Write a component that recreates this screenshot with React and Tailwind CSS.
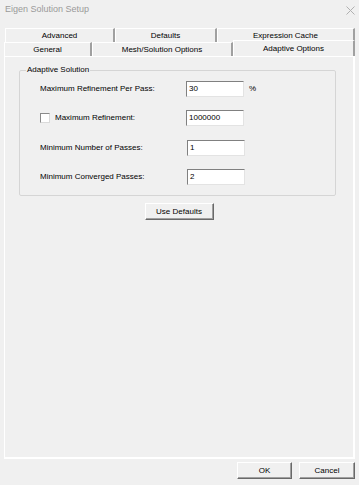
import React from "react";

const font = { fontFamily: '"Liberation Sans", Arial, sans-serif' };

function Tab({ w, children }) {
  return (
    <div
      className={`h-full flex items-center justify-center border-t border-l border-white border-r-2 border-r-[#a0a0a0] text-[8px] text-black ${w}`}
    >
      {children}
    </div>
  );
}

function Field({ value }) {
  return (
    <div className="w-[58px] h-[16px] bg-white border-t border-l border-[#808080] border-r border-b border-r-[#e3e3e3] border-b-[#e3e3e3] flex items-center pl-[2px] text-[8px] text-black">
      {value}
    </div>
  );
}

function Btn({ w, children }) {
  return (
    <div
      className={`h-[17px] ${w} bg-[#f0f0f0] border-t border-l border-white border-r border-b border-r-[#696969] border-b-[#696969] shadow-[inset_-1px_-1px_0_#a0a0a0] flex items-center justify-center text-[8px] text-black`}
    >
      {children}
    </div>
  );
}

export default function App() {
  return (
    <div
      className="w-[359px] h-[485px] bg-[#f0f0f0] flex flex-col overflow-hidden"
      style={font}
    >
      <div className="h-[20px] flex items-center justify-between pl-[5px] pr-[4px]">
        <span className="text-[9px] text-[#9a9a9a]">Eigen Solution Setup</span>
        <svg width="9" height="9" viewBox="0 0 9 9" className="mt-[1px]">
          <path d="M0.5 0.5 L8.5 8.5 M8.5 0.5 L0.5 8.5" stroke="#b0b0b0" strokeWidth="1" />
        </svg>
      </div>

      <div className="mt-[8px] ml-[5px] w-[350px] h-[14px] flex">
        <Tab w="w-[110px]">Advanced</Tab>
        <Tab w="w-[102px]">Defaults</Tab>
        <Tab w="w-[138px]">Expression Cache</Tab>
      </div>
      <div className="ml-[4px] w-[351px] h-[14px] flex">
        <Tab w="w-[88px]">General</Tab>
        <Tab w="w-[141px]">Mesh/Solution Options</Tab>
        <div className="w-[122px] h-[16px] -mt-[2px] bg-[#f0f0f0] border-t border-l border-white border-r-2 border-r-[#a0a0a0] flex items-start justify-center pt-[2px] text-[8px] text-black relative z-10">
          Adaptive Options
        </div>
      </div>

      <div className="ml-[4px] w-[351px] h-[403px] border-t border-l border-white border-r-2 border-b-2 border-[#a0a0a0] border-t-white border-l-white flex flex-col">
        <fieldset className="ml-[14px] mt-[8px] w-[317px] h-[131px] border border-[#d5d5d5] rounded-[2px]">
          <legend className="ml-[6px] px-[1px] text-[8px] text-black leading-[10px]">
            Adaptive Solution
          </legend>
          <div className="flex flex-col gap-[13px] mt-[6px] pl-[20px]">
            <div className="flex items-center h-[16px]">
              <span className="w-[146px] text-[8px] text-black">Maximum Refinement Per Pass:</span>
              <Field value="30" />
              <span className="ml-[5px] text-[8px] text-black">%</span>
            </div>
            <div className="flex items-center h-[16px]">
              <div className="w-[146px] flex items-center">
                <div className="w-[10px] h-[10px] bg-white border border-[#8a8a8a] border-r-[#dadada] border-b-[#dadada]" />
                <span className="ml-[5px] text-[8px] text-black">Maximum Refinement:</span>
              </div>
              <Field value="1000000" />
            </div>
            <div className="flex items-center h-[16px] mt-[1px]">
              <span className="w-[147px] text-[8px] text-black">Minimum Number of Passes:</span>
              <Field value="1" />
            </div>
            <div className="flex items-center h-[16px]">
              <span className="w-[147px] text-[8px] text-black">Minimum Converged Passes:</span>
              <Field value="2" />
            </div>
          </div>
        </fieldset>
        <div className="flex justify-center mt-[7px]">
          <Btn w="w-[69px]">Use Defaults</Btn>
        </div>
      </div>

      <div className="flex justify-end gap-[7px] pr-[4px] mt-[3px]">
        <Btn w="w-[55px]">OK</Btn>
        <Btn w="w-[56px]">Cancel</Btn>
      </div>
    </div>
  );
}
